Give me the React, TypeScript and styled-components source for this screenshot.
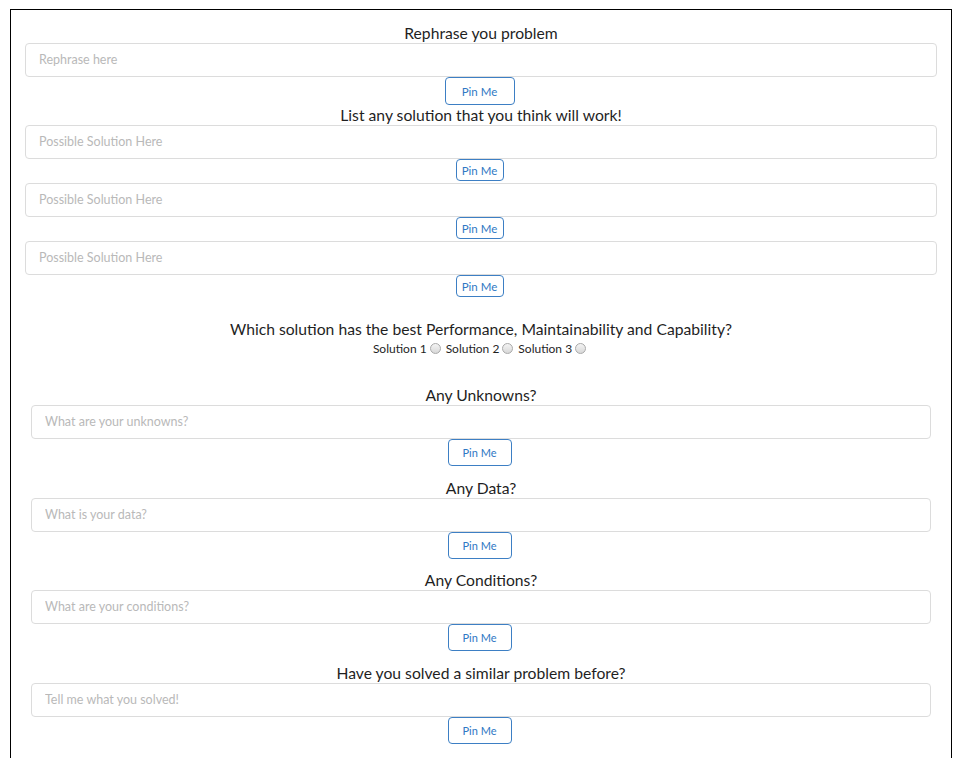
import React from 'react';
import styled, { createGlobalStyle } from 'styled-components';

const GlobalStyle = createGlobalStyle`
  body {
    margin: 0;
    background: #fff;
    font-family: Lato, "Liberation Sans", sans-serif;
    color: #1f1f1f;
  }
`;

const Frame = styled.div`
  margin: 9px 7px 0 10px;
  border: 1px solid #000;
  border-bottom: none;
  min-height: 780px;
  box-sizing: border-box;
`;

const Section = styled.div<{ $inset: number; $top: number }>`
  display: flex;
  flex-direction: column;
  padding: ${(p) => p.$top}px ${(p) => p.$inset}px 0;
`;

const Heading = styled.div<{ $gap?: number }>`
  font-size: 15.7px;
  line-height: 20px;
  text-align: center;
  margin-top: ${(p) => p.$gap ?? 0}px;
`;

const TextField = styled.input`
  display: block;
  box-sizing: border-box;
  width: 100%;
  height: 34px;
  margin: 0;
  padding: 0 13px 1px;
  border: 1px solid #dcdcdc;
  border-radius: 4px;
  font-family: Lato, "Liberation Sans", sans-serif;
  font-size: 12.5px;
  color: #333;
  outline: none;

  &::placeholder {
    color: #b9b9b9;
  }
`;

type Size = 'lg' | 'sm' | 'md';

const buttonSizes: Record<Size, { w: number; h: number; fs: number }> = {
  lg: { w: 70, h: 28, fs: 11.5 },
  sm: { w: 48, h: 22, fs: 11.5 },
  md: { w: 64, h: 27, fs: 11 },
};

const ButtonRow = styled.div<{ $after: number }>`
  display: flex;
  justify-content: center;
  padding-right: 3px;
  margin-bottom: ${(p) => p.$after}px;
`;

const PinButton = styled.button<{ $size: Size }>`
  box-sizing: border-box;
  width: ${(p) => buttonSizes[p.$size].w}px;
  height: ${(p) => buttonSizes[p.$size].h}px;
  padding: 0;
  background: #fff;
  border: 1px solid #3d7fc4;
  border-radius: 4px;
  color: #2f78c4;
  font-family: Lato, "Liberation Sans", sans-serif;
  font-size: ${(p) => buttonSizes[p.$size].fs}px;
  cursor: pointer;
`;

const RadioLine = styled.div`
  display: flex;
  justify-content: center;
  align-items: center;
  height: 18px;
  font-size: 12px;
  margin-bottom: 28px;
  padding-left: 2px;
`;

const RadioLabel = styled.label`
  display: flex;
  align-items: center;
`;

const Radio = styled.input`
  appearance: none;
  width: 11px;
  height: 11px;
  margin: 1px 5px 0 3px;
  border-radius: 50%;
  border: 1px solid #a9a9a9;
  background: linear-gradient(#f4f4f4, #d8d8d8);
  box-sizing: border-box;
`;

const Field = ({ placeholder, size, after }: { placeholder: string; size: Size; after: number }) => (
  <>
    <TextField placeholder={placeholder} />
    <ButtonRow $after={after}>
      <PinButton $size={size}>Pin Me</PinButton>
    </ButtonRow>
  </>
);

export default function App() {
  return (
    <>
      <GlobalStyle />
      <Frame>
        <Section $inset={14} $top={13}>
          <Heading>Rephrase you problem</Heading>
          <Field placeholder="Rephrase here" size="lg" after={0} />
          <Heading>List any solution that you think will work!</Heading>
          <Field placeholder="Possible Solution Here" size="sm" after={2} />
          <Field placeholder="Possible Solution Here" size="sm" after={2} />
          <Field placeholder="Possible Solution Here" size="sm" after={0} />
          <Heading $gap={22}>Which solution has the best Performance, Maintainability and Capability?</Heading>
          <RadioLine>
            {[1, 2, 3].map((n) => (
              <RadioLabel key={n}>
                Solution {n}
                <Radio type="radio" name="best" />
              </RadioLabel>
            ))}
          </RadioLine>
        </Section>
        <Section $inset={20} $top={0}>
          <Heading>Any Unknowns?</Heading>
          <Field placeholder="What are your unknowns?" size="md" after={0} />
          <Heading $gap={11.5}>Any Data?</Heading>
          <Field placeholder="What is your data?" size="md" after={0} />
          <Heading $gap={11.5}>Any Conditions?</Heading>
          <Field placeholder="What are your conditions?" size="md" after={0} />
          <Heading $gap={11.5}>Have you solved a similar problem before?</Heading>
          <Field placeholder="Tell me what you solved!" size="md" after={0} />
        </Section>
      </Frame>
    </>
  );
}
